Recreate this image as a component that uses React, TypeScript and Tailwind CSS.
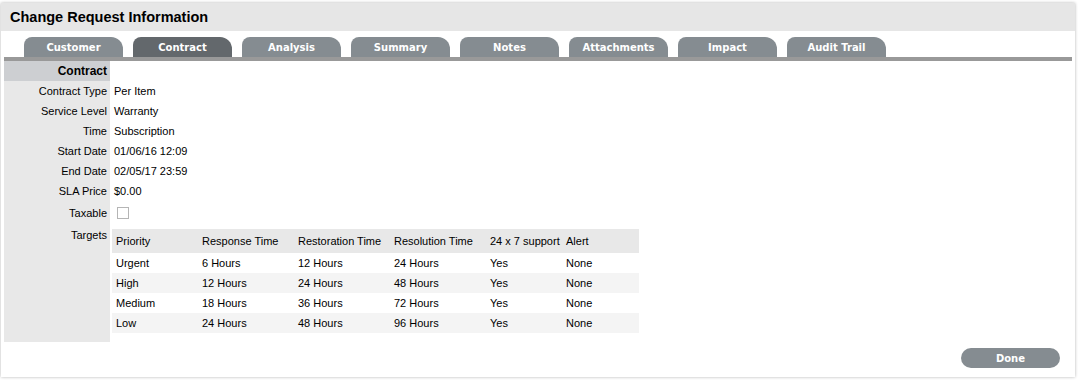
import React from "react";

const tabs = ["Customer", "Contract", "Analysis", "Summary", "Notes", "Attachments", "Impact", "Audit Trail"];

const details: [string, string][] = [
  ["Contract Type", "Per Item"],
  ["Service Level", "Warranty"],
  ["Time", "Subscription"],
  ["Start Date", "01/06/16 12:09"],
  ["End Date", "02/05/17 23:59"],
  ["SLA Price", "$0.00"],
];

const targets = [
  ["Urgent", "6 Hours", "12 Hours", "24 Hours", "Yes", "None"],
  ["High", "12 Hours", "24 Hours", "48 Hours", "Yes", "None"],
  ["Medium", "18 Hours", "36 Hours", "72 Hours", "Yes", "None"],
  ["Low", "24 Hours", "48 Hours", "96 Hours", "Yes", "None"],
];

const cols = ["w-[86px]", "w-[96px]", "w-[96px]", "w-[96px]", "w-[76px]", "flex-1"];
const heads = ["Priority", "Response Time", "Restoration Time", "Resolution Time", "24 x 7 support", "Alert"];

function Row({ label, children }: { label: string; children?: React.ReactNode }) {
  return (
    <div className="flex h-[20px]">
      <div className="w-[106px] bg-[#e8e8e8] text-right pr-[3px] leading-[20px]">{label}</div>
      <div className="pl-[4px] leading-[20px]">{children}</div>
    </div>
  );
}

export default function App() {
  return (
    <div className="w-[1079px] h-[381px] bg-white pt-[3px] pl-[1px] font-['Liberation_Sans',Arial,sans-serif] text-[11px] text-black">
      <div className="w-[1074px] h-[374px] bg-white shadow-[0_0_3px_rgba(0,0,0,0.3)] flex flex-col">
        <div className="h-[28px] bg-[#e6e6e6] pl-[9px] flex items-center">
          <h1 className="text-[14.5px] font-bold text-black pt-[1px]">Change Request Information</h1>
        </div>

        <div className="px-[3px] pt-[6px]">
          <div className="flex gap-[10px] pl-[20px] h-[20px]">
            {tabs.map((t) => (
              <div
                key={t}
                className={`w-[99px] h-[20px] rounded-tl-[8px] rounded-tr-[12px] flex items-center justify-center text-white font-bold text-[10px] font-['DejaVu_Sans',Verdana,sans-serif] ${
                  t === "Contract" ? "bg-[#63686c]" : "bg-[#858c91]"
                }`}
              >
                {t}
              </div>
            ))}
          </div>
          <div className="h-[4px] bg-[#999999]" />

          <div className="flex flex-col">
            <div className="flex h-[20px]">
              <div className="w-[106px] bg-[#cdcfd2] text-right pr-[3px] leading-[20px] text-[12px] font-bold">Contract</div>
            </div>
            {details.map(([l, v]) => (
              <Row key={l} label={l}>
                {v}
              </Row>
            ))}
            <div className="flex h-[24px]">
              <div className="w-[106px] bg-[#e8e8e8] text-right pr-[3px] leading-[24px]">Taxable</div>
              <div className="pl-[7px] pt-[6px]">
                <div className="w-[12px] h-[12px] border border-[#b5b5b5] bg-white" />
              </div>
            </div>
            <div className="flex">
              <div className="w-[106px] bg-[#e8e8e8] text-right pr-[3px] pt-[2px] h-[117px]">Targets</div>
              <div className="pl-[2px] pt-[4px]">
                <div className="w-[527px]">
                  <div className="flex h-[24px] items-center bg-[#e8e8e8]">
                    {heads.map((h, i) => (
                      <div key={h} className={`${cols[i]} pl-[4px] whitespace-nowrap`}>
                        {h}
                      </div>
                    ))}
                  </div>
                  {targets.map((r, ri) => (
                    <div key={r[0]} className={`flex h-[20px] items-center ${ri % 2 === 1 ? "bg-[#f4f4f4]" : "bg-white"}`}>
                      {r.map((c, i) => (
                        <div key={i} className={`${cols[i]} pl-[4px] whitespace-nowrap`}>
                          {c}
                        </div>
                      ))}
                    </div>
                  ))}
                </div>
              </div>
            </div>
          </div>

          <div className="flex justify-end pr-[12px] pt-[6px]">
            <button className="w-[99px] h-[20px] rounded-full bg-[#858c91] text-white font-bold text-[10px] font-['DejaVu_Sans',Verdana,sans-serif]">
              Done
            </button>
          </div>
        </div>
      </div>
    </div>
  );
}
